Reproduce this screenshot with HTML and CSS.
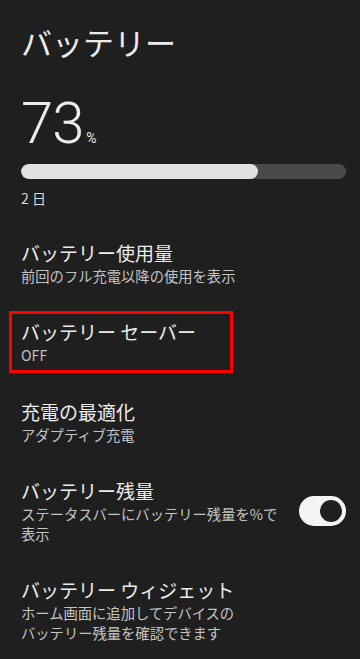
FILE: index.html
```html
<!DOCTYPE html>
<html lang="ja">
<head>
    <meta charset="UTF-8">
    <meta name="viewport" content="width=device-width, initial-scale=1.0">
    <title>バッテリー</title>
    <link rel="stylesheet" href="styles.css">
</head>
<body>
    <div class="screen">
        <h1 class="title">バッテリー</h1>

        <div class="level">
            <span class="level-num">73</span><span class="level-unit">%</span>
        </div>
        <div class="bar">
            <div class="bar-fill" style="width: 73%"></div>
        </div>
        <div class="remain">2 日</div>

        <div class="item">
            <div class="item-title">バッテリー使用量</div>
            <div class="item-sub">前回のフル充電以降の使用を表示</div>
        </div>

        <div class="item">
            <div class="highlight">
                <div class="item-title">バッテリー セーバー</div>
                <div class="item-sub">OFF</div>
            </div>
        </div>

        <div class="item">
            <div class="item-title">充電の最適化</div>
            <div class="item-sub">アダプティブ充電</div>
        </div>

        <div class="item item-switch">
            <div class="item-text">
                <div class="item-title">バッテリー残量</div>
                <div class="item-sub">ステータスバーにバッテリー残量を%で表示</div>
            </div>
            <div class="switch">
                <div class="switch-thumb"></div>
            </div>
        </div>

        <div class="item">
            <div class="item-title">バッテリー ウィジェット</div>
            <div class="item-sub">ホーム画面に追加してデバイスの<br>バッテリー残量を確認できます</div>
        </div>
    </div>
</body>
</html>
```

FILE: styles.css
```css
html, body {
    margin: 0;
    padding: 0;
    background-color: #1f1f1f;
}
body {
    font-family: "Noto Sans CJK JP", Roboto, sans-serif;
    color: #e6e6e6;
}
.screen {
    padding: 20px 14px 0 21px;
}
.title {
    margin: 0;
    font-size: 31px;
    font-weight: 400;
    line-height: 44px;
    color: #ececec;
}
.level {
    margin-top: 29px;
    height: 60px;
    display: flex;
    align-items: baseline;
}
.level-num {
    font-family: Roboto, sans-serif;
    font-weight: 300;
    font-size: 58px;
    line-height: 60px;
    letter-spacing: -1px;
    color: #ececec;
}
.level-unit {
    font-family: Roboto, sans-serif;
    font-size: 14px;
    margin-left: 3px;
    color: #ececec;
}
.bar {
    margin-top: 11px;
    height: 15px;
    border-radius: 8px;
    background-color: #4a4a4a;
    overflow: hidden;
}
.bar-fill {
    height: 100%;
    border-radius: 8px;
    background-color: #e1e1e1;
}
.remain {
    margin-top: 9px;
    margin-bottom: 16px;
    font-size: 14px;
    line-height: 20px;
    color: #d8d8d8;
}
.item {
    padding: 16px 0 17px;
}
.item-title {
    font-size: 19px;
    line-height: 26px;
    color: #ececec;
}
.item-sub {
    font-size: 14.3px;
    line-height: 20px;
    color: #c4c4c4;
}
.highlight {
    display: inline-block;
    margin: -8px 0 -8px -12px;
    padding: 5px 0 5px 9px;
    width: 209px;
    border: 3px solid #ff0000;
}
.item-switch {
    display: flex;
    align-items: center;
    gap: 14px;
}
.item-text {
    flex: 1;
}
.switch {
    flex: none;
    width: 47px;
    height: 30px;
    border-radius: 15px;
    background-color: #f4f4f4;
    display: flex;
    align-items: center;
    justify-content: flex-end;
    padding-right: 4px;
    box-sizing: border-box;
}
.switch-thumb {
    width: 22px;
    height: 22px;
    border-radius: 50%;
    background-color: #202020;
}
```
